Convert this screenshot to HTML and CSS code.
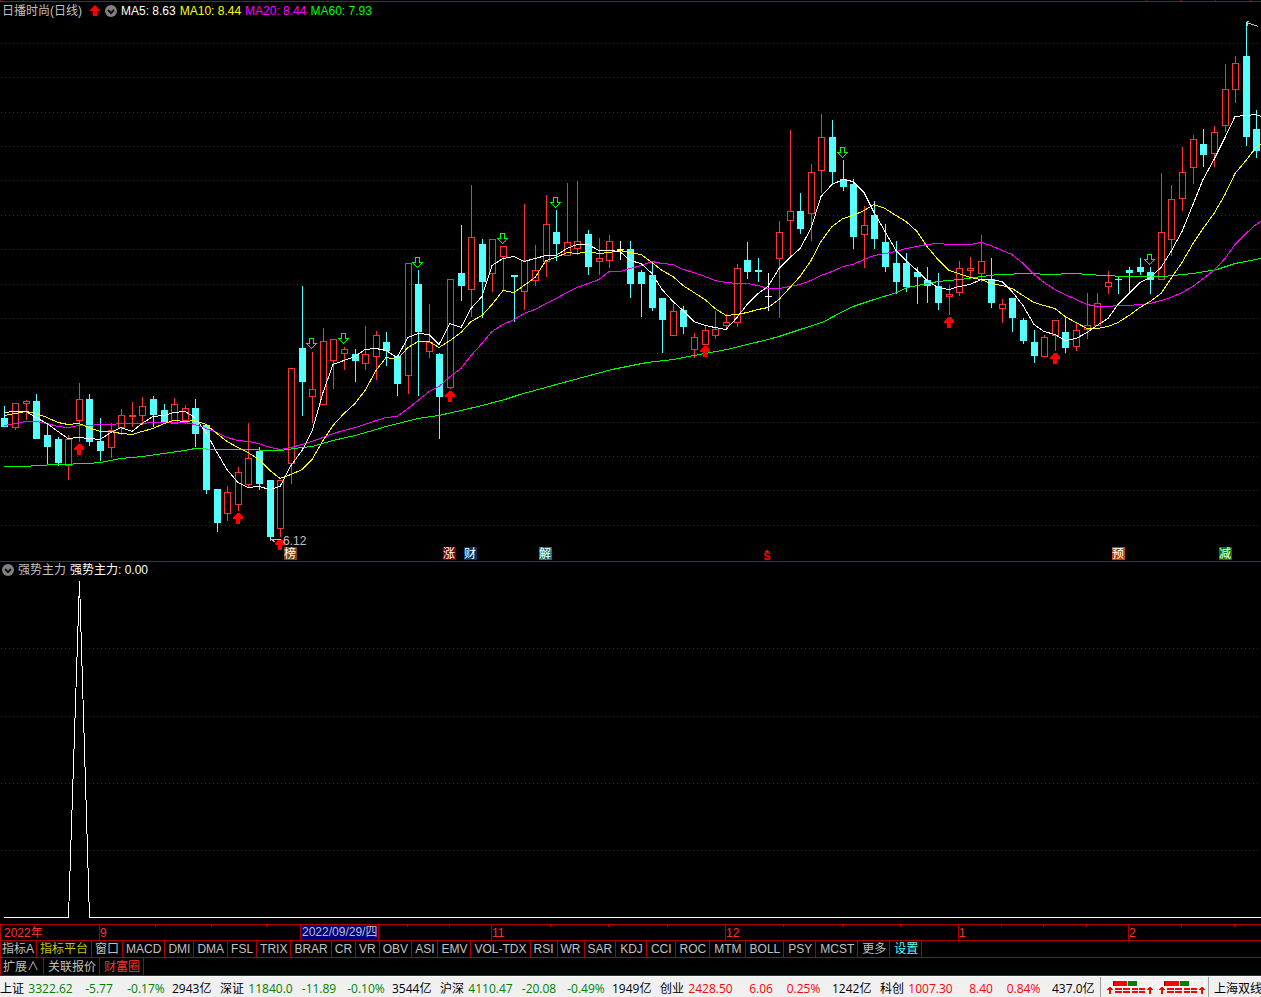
FILE: index.html
```html
<!DOCTYPE html>
<html lang="zh-CN">
<head>
<meta charset="utf-8">
<title>日播时尚(日线)</title>
<link rel="stylesheet" href="styles.css">
</head>
<body>
<main class="charts">
  <section class="panel" aria-label="K线图">
    <svg class="top-rule" aria-hidden="true"><path class="rule" d="M0 1.5H4000M.5 0V1M23.5 0V1M1146.5 0V1M1180.5 0V1M1215.5 0V1M1250.5 0V1"/></svg>
    <header class="legend">
      <h1 class="name">日播时尚(日线)</h1>
      <svg class="up-mark" viewBox="0 0 10 11"><path d="M5 0l5 5v1H7v5H3V6H0V5z"/></svg>
      <button class="fold" aria-label="展开"><svg viewBox="0 0 12 12"><circle cx="6" cy="6" r="6"/><path d="M3 5l3 3 3-3"/></svg></button>
      <span class="ma5">MA5: 8.63</span>
      <span class="ma10">MA10: 8.44</span>
      <span class="ma20">MA20: 8.44</span>
      <span class="ma60">MA60: 7.93</span>
    </header>
    <svg class="plot main-plot" id="main-plot" role="img" aria-label="日K线"></svg>
  </section>
  <section class="panel sub-panel" aria-label="强势主力">
    <header class="legend sub-legend">
      <button class="fold" aria-label="展开"><svg viewBox="0 0 12 12"><circle cx="6" cy="6" r="6"/><path d="M3 5l3 3 3-3"/></svg></button>
      <h2 class="name">强势主力</h2>
      <span class="ma5">强势主力: 0.00</span>
    </header>
    <svg class="plot sub-plot" id="sub-plot" role="img" aria-label="强势主力"></svg>
  </section>
  <svg class="axis" id="axis" role="img" aria-label="日期"></svg>
</main>
<nav class="tabs" aria-label="指标">
  <button>指标A</button><button class="active">指标平台</button><button>窗口</button><button>MACD</button><button>DMI</button><button>DMA</button><button>FSL</button><button>TRIX</button><button>BRAR</button><button>CR</button><button>VR</button><button>OBV</button><button>ASI</button><button>EMV</button><button>VOL-TDX</button><button>RSI</button><button>WR</button><button>SAR</button><button>KDJ</button><button>CCI</button><button>ROC</button><button>MTM</button><button>BOLL</button><button>PSY</button><button>MCST</button><button>更多</button><button class="settings">设置</button>
</nav>
<nav class="tabs tabs-extra" aria-label="扩展">
  <button>扩展∧</button><button>关联报价</button><button class="hot">财富圈</button>
</nav>
<footer class="status">
  <div class="index down"><b>上证</b><span>3322.62</span><span>-5.77</span><span>-0.17%</span><b class="amount">2943亿</b></div>
  <div class="index down"><b>深证</b><span>11840.0</span><span>-11.89</span><span>-0.10%</span><b class="amount">3544亿</b></div>
  <div class="index down"><b>沪深</b><span>4110.47</span><span>-20.08</span><span>-0.49%</span><b class="amount">1949亿</b></div>
  <div class="index up"><b>创业</b><span>2428.50</span><span>6.06</span><span>0.25%</span><b class="amount">1242亿</b></div>
  <div class="index up"><b>科创</b><span>1007.30</span><span>8.40</span><span>0.84%</span><b class="amount">437.0亿</b></div>
  <div class="meters">
    <svg width="50" height="15" aria-hidden="true"><path class="frame" d="M.5.5H49.5V6.5H.5zM37.5 0V7"/><path class="red" d="M10 1h14v5H10zM6 7h2v1h1v1h1v1H8v4H6v-4H4V9h1V8h1zM46 7h2v1h1v1h1v1h-2v4h-2v-4h-2V9h1V8h1zM12 8h7v2h-7zM20 8h7v2h-7zM29 8h6v2h-6zM36 8h6v2h-6zM12 11h7v2h-7zM20 11h7v2h-7zM29 11h6v2h-6zM36 11h6v2h-6z"/><path class="edge" d="M10 1h1v5h-1z"/><path class="green" d="M25 1h9v5h-9z"/></svg>
    <svg width="50" height="15" aria-hidden="true"><path class="frame" d="M.5.5H49.5V6.5H.5zM37.5 0V7"/><path class="red" d="M9 1h15v5H9zM6 7h2v1h1v1h1v1H8v4H6v-4H4V9h1V8h1zM46 7h2v1h1v1h1v1h-2v4h-2v-4h-2V9h1V8h1zM12 8h7v2h-7zM20 8h7v2h-7zM29 8h6v2h-6zM36 8h6v2h-6zM12 11h7v2h-7zM20 11h7v2h-7zM29 11h6v2h-6zM36 11h6v2h-6z"/><path class="edge" d="M9 1h1v5H9z"/><path class="green" d="M25 1h9v5h-9z"/></svg>
  </div>
  <b class="line-name">上海双线</b>
</footer>
<script src="chart.js"></script>
</body>
</html>
```
FILE: styles.css
```css
* { box-sizing: border-box; }

body {
  margin: 0;
  min-height: 100vh;
  display: flex;
  flex-direction: column;
  overflow-x: hidden;
  background: #000;
  color: #c0c0c0;
  font: 12px/16px "Liberation Sans", "Noto Sans CJK SC", sans-serif;
}

svg { display: block; }

button {
  border: 0;
  padding: 0;
  background: none;
  color: inherit;
  font: inherit;
}

.charts { flex: 1; }
.top-rule { width: 100%; height: 2px; }
.rule { stroke: #b00000; fill: none; }

.legend {
  display: flex;
  align-items: center;
  gap: 4px;
  height: 19px;
  padding: 0 0 2px 2px;
  white-space: nowrap;
}
.name { margin: 0; font-size: 12px; font-weight: 400; }
.up-mark { width: 10px; height: 11px; margin: 0 1px 0 4px; fill: #f00; }
.fold svg { width: 12px; height: 12px; fill: #808080; }
.fold path { fill: none; stroke: #111; stroke-width: 2; }
.ma5 { color: #fff; }
.ma10 { color: #ff0; }
.ma20 { color: #f0f; }
.ma60 { color: #0f0; }

.sub-panel { border-top: 1px solid #b00000; }
.sub-legend { height: 18px; }

.plot, .axis { width: 100%; shape-rendering: crispEdges; }
.main-plot { height: 540px; }
.sub-plot { height: 344px; }
.axis { height: 16px; }
svg text { font-size: 12px; fill: #c0c0c0; }

.grid { stroke: #a00000; stroke-dasharray: 1 3; }
.rise { fill: none; stroke: #ff3232; }
.fall { fill: #54ffff; stroke: none; }
.flat { fill: #fff; }
.curve { fill: none; stroke-width: 1; }
.curve5, .signal { stroke: #fff; }
.curve10 { stroke: #ff0; }
.curve20 { stroke: #f0f; }
.curve60 { stroke: #0f0; }
.signal { fill: none; }
.buy { fill: #f00; }
.sell { fill: none; stroke: #0f0; }
.pointer { fill: none; stroke: #c0c0c0; }
svg .badge-text { fill: #fff; font-size: 12px; text-anchor: middle; }
svg .dollar { fill: #f00; font-size: 11px; font-weight: 700; text-anchor: middle; }
svg .month { fill: #ff3232; }
.date-box { fill: #000080; stroke: #b00000; }

.tabs {
  display: flex;
  height: 17px;
  overflow: hidden;
  border-top: 1px solid #b00000;
}
.tabs button {
  flex: none;
  height: 16px;
  padding: 0 3px;
  border-right: 1px solid #b00000;
  white-space: nowrap;
}
.tabs button:first-child { border-left: 1px solid #b00000; padding: 0 2px 0 1px; }
.tabs button:nth-child(n+19) { padding-left: 4px; }
.tabs .active { color: #c8c800; }
.tabs .settings { color: #54ffff; }
.tabs .hot { color: #ff3232; }
.tabs-extra { height: 19px; border-bottom: 1px solid #b00000; }
.tabs-extra button { height: 17px; padding: 0 3px 0 4px; line-height: 19px; }
.tabs-extra button:first-child { padding: 0 4px 0 2px; }

.status {
  display: flex;
  align-items: flex-start;
  height: 21px;
  overflow: hidden;
  background: #f0f0f0;
  border-top: 1px solid #fff;
  color: #000;
  font: 12px/23px "Open Sans", "Noto Sans CJK SC", sans-serif;
  white-space: nowrap;
}
.status b { font-weight: 400; color: #000; }
.index {
  flex: none;
  display: grid;
  grid-template-columns: 28px 45px 52px 42px 53px;
  justify-items: center;
}
.index b { justify-self: start; }
.index .amount { padding-left: 5px; }
.index.up { grid-template-columns: 28px 45px 56px 29px 62px; }
.index.up .amount { padding-left: 14px; }
.down { color: #008000; }
.up { color: #f00; }
.meters {
  flex: none;
  display: flex;
  gap: 2px;
  height: 20px;
  padding: 3px 3px 0 2px;
  border-left: 1px solid #a0a0a0;
  border-right: 1px solid #a0a0a0;
  shape-rendering: crispEdges;
}
.frame { fill: none; stroke: #fff; }
.red { fill: #f00; }
.edge { fill: #800000; }
.green { fill: #008000; }
.line-name { padding-left: 5px; }
```
FILE: chart.js
```javascript
// Each candle: kind (r rise, c fall, w flat), high, body top, body bottom, low
const candles = `c 406 418 427 427|r 403 403 428 430|r 400 401 404 420|c 394 401 439 439|c 423 435 447 464|c 437 439 463 466
r 435 439 466 480|r 383 399 421 442|c 394 399 442 446|c 418 441 451 461|r 423 430 448 458|r 409 415 428 435
r 402 415 417 427|r 397 406 416 425|c 396 399 415 427|c 404 410 422 424|r 398 404 424 424|r 405 408 421 424
c 399 408 434 447|c 425 425 490 494|c 489 489 523 532|r 486 492 514 521|r 467 472 505 511|r 423 458 485 487
c 447 451 484 490|c 480 480 537 540|r 480 480 529 537|r 368 368 464 484|c 286 348 382 416|r 352 389 397 423
r 328 341 405 405|r 339 339 361 389|r 347 349 354 370|c 349 354 361 382|r 326 354 364 370|r 331 335 357 380
c 332 342 351 366|c 356 356 384 396|r 263 263 376 394|c 270 284 332 396|r 304 342 352 358|c 353 354 397 439
r 279 279 388 389|c 225 273 286 301|r 185 237 290 317|c 239 244 282 318|r 239 239 274 292|r 246 246 257 290
c 275 275 277 322|r 204 260 292 310|r 245 270 281 286|r 195 224 262 277|c 210 232 244 261|r 183 242 256 256
r 181 241 249 255|c 230 234 267 275|r 238 258 262 275|r 235 241 261 268|w 241 249 250 260|c 241 249 284 298
c 270 272 284 317|c 262 275 308 311|c 298 298 320 353|r 304 311 336 336|c 306 310 327 334|r 333 337 350 358
r 325 330 345 345|r 311 329 336 339|r 314 322 326 329|r 264 268 323 327|c 242 260 272 279|c 258 270 272 282
w 273 296 297 311|r 221 232 259 318|r 130 211 221 257|c 193 211 229 234|r 164 172 214 241|r 114 137 171 193
c 120 137 172 185|c 160 179 187 191|c 179 184 237 249|r 206 225 235 268|c 201 215 239 249|c 224 242 267 272
c 241 263 282 294|c 253 263 287 292|c 267 272 277 304|c 267 280 286 303|c 273 286 303 310|r 285 294 297 315
r 261 268 293 296|r 257 268 271 278|r 235 261 274 282|c 258 279 303 308|r 299 304 309 323|c 298 298 318 332
c 318 320 341 344|c 330 342 356 363|r 335 337 357 357|r 320 320 336 351|c 317 332 348 353|r 323 330 347 351
r 293 325 330 339|r 293 303 326 326|r 271 282 287 294|c 276 279 280 294|c 267 270 273 292|c 258 267 272 275
c 267 272 280 294|r 173 232 280 280|r 185 199 240 256|r 147 172 199 211|r 135 139 168 184|c 129 144 155 167
r 126 132 154 167|r 64 89 126 132|r 56 63 90 103|c 22 56 137 146|c 110 129 151 158`
  .split(/[|\n]/).map(row => {
    const [kind, ...v] = row.trim().split(' ');
    const [high, top, bottom, low] = v.map(Number);
    return { kind, high, top, bottom, low, close: kind === 'r' ? top : bottom };
  });

const px = i => Math.round(4.48 + 10.609 * i);

// Averages for the first bars come from earlier trading days
const history = {
  5: [412, 411, 411, 417],
  10: [415, 413, 411, 413, 417, 422, 424, 423, 427],
  20: [425, 423, 421, 421, 423, 426, 427, 425, 425, 424, 424, 423, 423, 423, 422, 422, 422, 422, 424]
};
const tail = { 5: 116, 10: 144, 20: 221 };

function average(n) {
  const pts = candles.map((_, i) => {
    const y = i < n - 1
      ? history[n][i]
      : candles.slice(i - n + 1, i + 1).reduce((sum, d) => sum + d.close, 0) / n;
    return `${px(i)},${Math.round(y)}.5`;
  });
  pts.push(`1261,${tail[n]}.5`);
  return `<polyline class="curve curve${n}" points="${pts.join(' ')}"/>`;
}

const ma60 = '4,466 26,466 36,465 58,464 89,463 100,462 121,458 142,456 164,453 185,450 195,448 217,449 248,449 270,450 280,450 302,447 312,446 333,440 355,435 376,429 386,426 418,418 439,415 461,410 482,405 505,399 520,394 560,383 612,369 647,362 673,359 694,355 727,349 747,344 768,339 779,336 800,329 822,322 843,311 853,306 874,299 897,292 907,287 928,283 938,281 960,279 982,276 998,274 1030,273 1050,274 1073,273 1090,274 1102,275 1127,276 1163,276 1193,273 1217,269 1235,263 1261,258';

const gridLine = y => `<line class="grid" x1="1" x2="100%" y1="${y}.5" y2="${y}.5"/>`;

function candle(d, i) {
  const x = px(i);
  if (d.kind === 'r') {
    return `<path class="rise" d="M${x + .5} ${d.high}V${d.top}M${x + .5} ${d.bottom}V${d.low}M${x - 2.5} ${d.top + .5}h6V${d.bottom - .5}h-6z"/>`;
  }
  const cls = d.kind === 'w' ? 'flat' : 'fall';
  return `<path class="${cls}" d="M${x} ${d.high}h1V${d.low}h-1zM${x - 3} ${d.top}h7V${d.bottom}h-7z"/>`;
}

const buys = [[79, 444], [238, 513], [280, 539], [450, 391], [705, 346], [949, 317], [1055, 353]];
const sells = [[312, 338], [344, 333], [418, 257], [503, 233], [556, 197], [843, 147], [1150, 254]];
const badges = [[284, '榜', '#804000'], [443, '涨', '#800000'], [464, '财', '#003366'], [539, '解', '#008080'], [1112, '预', '#c04000'], [1219, '减', '#008000']];

document.getElementById('main-plot').innerHTML = '<g transform="translate(0 -21)">'
  + [43, 77, 112, 146, 180, 215, 249, 284, 318, 353, 387, 422, 456, 490, 525].map(gridLine).join('')
  + candles.map(candle).join('')
  + `<polyline class="curve curve60" transform="translate(0 .5)" points="${ma60}"/>`
  + average(20) + average(10) + average(5)
  + buys.map(([x, y]) => `<path class="buy" d="M${x - 1} ${y}h2l4 4v2h-3v5h-4v-5h-3v-2z"/>`).join('')
  + sells.map(([x, y]) => `<path class="sell" d="M${x - 2.5} ${y + .5}h4v5h3l-5 5-5-5h3z"/>`).join('')
  + '<path class="pointer" d="M270.5 537v4M270 539.5H281M272 540l3 2M1258 26.5l-8-3h-3M1249 21.5h-2v4"/>'
  + '<text x="283" y="545">6.12</text>'
  + badges.map(([x, t, color]) => `<rect x="${x}" y="547" width="13" height="13" fill="${color}"/><text class="badge-text" x="${x + 6}" y="558">${t}</text>`).join('')
  + '<path class="buy" d="M764 552h1v-1h1v-1h2v1h1v1h1z"/><text class="dollar" x="767" y="560">S</text>'
  + '</g>';

document.getElementById('sub-plot').innerHTML = '<g transform="translate(0 -580)">'
  + [648, 716, 783, 850].map(gridLine).join('')
  + '<path class="signal" d="M4 917.5H68.5L79.5 581L89.5 917.5H4000"/></g>';

const months = [[99, '9'], [491, '11'], [725, '12'], [958, '1'], [1128, '2']];
const weeks = [155, 211, 266, 407, 449, 550, 608, 667, 783, 842, 900, 1001, 1043, 1086, 1181, 1234];
document.getElementById('axis').innerHTML = '<line class="rule" x2="100%" y1=".5" y2=".5"/>'
  + '<path class="rule" d="M.5 0V16"/><text class="month" x="4" y="13">2022年</text>'
  + months.map(([x, t]) => `<path class="rule" d="M${x}.5 0V16"/><text class="month" x="${x + 1}" y="13">${t}</text>`).join('')
  + weeks.map(x => `<path class="rule" d="M${x}.5 0V3"/>`).join('')
  + '<rect class="date-box" x="300.5" y=".5" width="78" height="16"/><text x="302" y="12">2022/09/29/四</text>';
```
